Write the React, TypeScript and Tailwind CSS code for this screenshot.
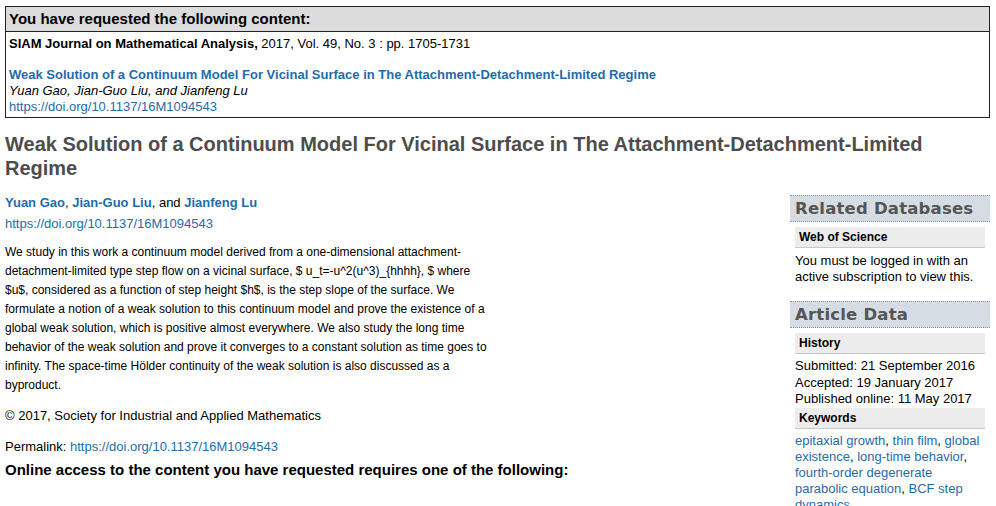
const link = "text-[#1f6cb0]";

function SideHeading({ children }: { children: string }) {
  return (
    <div className="bg-[#d5dce4] border-y border-dotted border-[#8a96a3] px-[5px] h-[27px] flex items-center whitespace-nowrap font-['DejaVu_Sans',sans-serif] font-bold text-[16.5px] tracking-[0.2px] text-[#555]">
      {children}
    </div>
  );
}

function SubHeading({ children }: { children: string }) {
  return (
    <div className="mx-[5px] mt-[5px] bg-[#ececec] border-b border-[#c8c8c8] h-[21px] px-[4px] flex items-center font-bold text-[12px] text-black">
      {children}
    </div>
  );
}

export default function App() {
  return (
    <div className="w-[996px] h-[506px] overflow-hidden bg-white text-black font-['Liberation_Sans',Arial,sans-serif] pt-[6px] px-[5px]">
      {/* requested content box */}
      <div className="w-[985px] border border-[#222]">
        <div className="bg-[#dcdcdc] border-b border-[#222] h-[25px] px-[3px] flex items-center font-bold text-[15px]">
          You have requested the following content:
        </div>
        <div className="px-[3px] pt-[4px] pb-[2px] text-[13px] leading-[16px]">
          <div>
            <span className="font-bold">SIAM Journal on Mathematical Analysis,</span> 2017, Vol. 49, No. 3 : pp. 1705-1731
          </div>
          <div className="h-[15px]" />
          <div className={`font-bold ${link}`}>
            Weak Solution of a Continuum Model For Vicinal Surface in The Attachment-Detachment-Limited Regime
          </div>
          <div className="italic">Yuan Gao, Jian-Guo Liu, and Jianfeng Lu</div>
          <div className={link}>https://doi.org/10.1137/16M1094543</div>
        </div>
      </div>

      <h1 className="mt-[14px] text-[20px] leading-[24px] font-bold text-[#4d4d4d] w-[960px]">
        Weak Solution of a Continuum Model For Vicinal Surface in The Attachment-Detachment-Limited Regime
      </h1>

      <div className="flex">
        {/* main column */}
        <div className="w-[785px]">
          <div className="mt-[12px] text-[13px] leading-[21px]">
            <div>
              <span className={`font-bold ${link}`}>Yuan Gao</span>,{" "}
              <span className={`font-bold ${link}`}>Jian-Guo Liu</span>, and{" "}
              <span className={`font-bold ${link}`}>Jianfeng Lu</span>
            </div>
            <div className={link}>https://doi.org/10.1137/16M1094543</div>
          </div>

          <p className="mt-[9px] w-[490px] text-[12px] leading-[19px]">
            We study in this work a continuum model derived from a one-dimensional attachment-detachment-limited type step flow on a vicinal surface, $ u_t=-u^2(u^3)_{"{hhhh}"}, $ where $u$, considered as a function of step height $h$, is the step slope of the surface. We formulate a notion of a weak solution to this continuum model and prove the existence of a global weak solution, which is positive almost everywhere. We also study the long time behavior of the weak solution and prove it converges to a constant solution as time goes to infinity. The space-time Hölder continuity of the weak solution is also discussed as a byproduct.
          </p>

          <p className="mt-[13px] text-[13px] leading-[16px]">© 2017, Society for Industrial and Applied Mathematics</p>

          <p className="mt-[15px] text-[13px] leading-[16px]">
            Permalink: <span className={link}>https://doi.org/10.1137/16M1094543</span>
          </p>

          <p className="mt-[6px] text-[15px] leading-[18px] font-bold">
            Online access to the content you have requested requires one of the following:
          </p>
        </div>

        {/* sidebar */}
        <div className="w-[200px] mt-[15px] text-[13px] leading-[16px]">
          <SideHeading>Related Databases</SideHeading>
          <SubHeading>Web of Science</SubHeading>
          <div className="px-[5px] pt-[5px] pb-[16px]">
            You must be logged in with an active subscription to view this.
          </div>

          <SideHeading>Article Data</SideHeading>
          <SubHeading>History</SubHeading>
          <div className="px-[5px] pt-[4px] leading-[16.5px]">
            <div>Submitted: 21 September 2016</div>
            <div>Accepted: 19 January 2017</div>
            <div>Published online: 11 May 2017</div>
          </div>
          <div className="mx-[5px] bg-[#ececec] border-b border-[#c8c8c8] h-[21px] px-[4px] flex items-center font-bold text-[12px]">
            Keywords
          </div>
          <div className={`px-[5px] pt-[4px] ${link}`}>
            epitaxial growth<span className="text-black">,</span> thin film<span className="text-black">,</span> global existence<span className="text-black">,</span> long-time behavior<span className="text-black">,</span> fourth-order degenerate parabolic equation<span className="text-black">,</span> BCF step dynamics
          </div>
        </div>
      </div>
    </div>
  );
}
